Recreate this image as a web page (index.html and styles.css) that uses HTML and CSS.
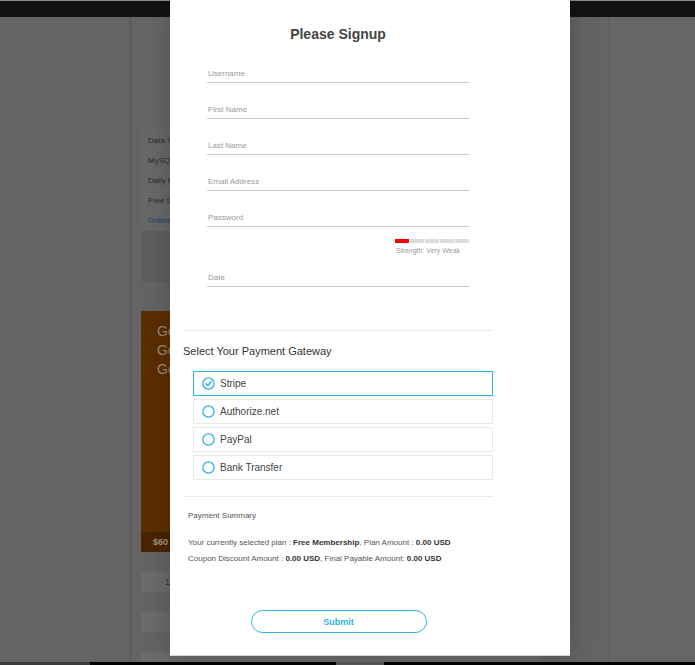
FILE: index.html
```html
<!DOCTYPE html>
<html>
<head>
<meta charset="utf-8">
<link rel="stylesheet" href="styles.css">
</head>
<body>
<div class="topbar"></div>
<div class="page">
  <div class="left"></div>
  <div class="main">
    <div class="card">
      <div class="card-top"></div>
      <div class="feat">Data Storage</div>
      <div class="feat">MySQL Databases</div>
      <div class="feat">Daily Backups</div>
      <div class="feat">Free Domain</div>
      <div class="feat link">Online Support</div>
      <div class="card-foot"></div>
    </div>
    <div class="promo">
      <div class="promo-text">Get<br>Get<br>Get</div>
      <div class="promo-price">$60</div>
    </div>
    <div class="row">15</div>
    <div class="row"></div>
    <div class="row last"></div>
  </div>
  <div class="right"></div>
</div>
<div class="bottombar">
  <span class="b1"></span><span class="b2"></span><span class="b3"></span><span class="b4"></span>
</div>

<div class="modal">
  <div class="inner">
    <h1 class="title">Please Signup</h1>
    <div class="form">
      <div class="field">Username</div>
      <div class="field">First Name</div>
      <div class="field">Last Name</div>
      <div class="field">Email Address</div>
      <div class="field">Password</div>
      <div class="strength">
        <div class="meter"><span class="seg red"></span><span class="seg"></span><span class="seg"></span><span class="seg"></span><span class="seg"></span></div>
        <div class="strength-text">Strength: Very Weak</div>
      </div>
      <div class="field date">Date</div>
    </div>
    <div class="divider first"></div>
    <div class="gw-title">Select Your Payment Gateway</div>
    <div class="options">
      <div class="option selected">
        <svg class="radio" width="13" height="13" viewBox="0 0 13 13"><circle cx="6.5" cy="6.5" r="5.6" fill="none" stroke="#2bb3e5" stroke-width="1.3"/><path d="M3.9 6.7 L5.8 8.5 L9.2 4.7" fill="none" stroke="#2bb3e5" stroke-width="1.4" stroke-linecap="round" stroke-linejoin="round"/></svg>
        <span>Stripe</span>
      </div>
      <div class="option">
        <svg class="radio" width="13" height="13" viewBox="0 0 13 13"><circle cx="6.5" cy="6.5" r="5.6" fill="none" stroke="#2bb3e5" stroke-width="1.3"/></svg>
        <span>Authorize.net</span>
      </div>
      <div class="option">
        <svg class="radio" width="13" height="13" viewBox="0 0 13 13"><circle cx="6.5" cy="6.5" r="5.6" fill="none" stroke="#2bb3e5" stroke-width="1.3"/></svg>
        <span>PayPal</span>
      </div>
      <div class="option">
        <svg class="radio" width="13" height="13" viewBox="0 0 13 13"><circle cx="6.5" cy="6.5" r="5.6" fill="none" stroke="#2bb3e5" stroke-width="1.3"/></svg>
        <span>Bank Transfer</span>
      </div>
    </div>
    <div class="divider second"></div>
    <div class="summary-title">Payment Summary</div>
    <div class="summary">
      <div>Your currently selected plan : <b>Free Membership</b>, Plan Amount : <b>0.00 USD</b></div>
      <div>Coupon Discount Amount : <b>0.00 USD</b>, Final Payable Amount: <b>0.00 USD</b></div>
    </div>
    <div class="submit-wrap"><button class="submit">Submit</button></div>
  </div>
</div>
</body>
</html>
```

FILE: styles.css
```css
* { box-sizing: border-box; }
html, body { margin: 0; padding: 0; }
body {
  width: 695px;
  height: 665px;
  overflow: hidden;
  background: #666;
  font-family: "Liberation Sans", Arial, sans-serif;
  position: relative;
}

/* background page (dimmed) */
.topbar {
  height: 17px;
  background: #111214;
  border-top: 1px solid #8c8c8c;
}
.page {
  display: flex;
  height: 645px;
}
.left {
  width: 131px;
  background: #646464;
  border-right: 1px solid #575757;
}
.main {
  width: 478px;
  padding-left: 10px;
  background: #646464;
}
.right {
  flex: 1;
  background: #666;
  border-left: 1px solid #575757;
}
.card {
  width: 400px;
  height: 265px;
  background: #666;
  display: flex;
  flex-direction: column;
}
.card-top { height: 114px; }
.feat {
  height: 20px;
  line-height: 20px;
  padding-left: 7px;
  font-size: 8px;
  color: #2c2c2c;
  background: #686868;
}
.feat.link { color: #1d4466; }
.card-foot {
  flex: 1;
  background: #5e5e5e;
}
.promo {
  margin-top: 29px;
  width: 400px;
  height: 241px;
  background: #5c2e01;
  display: flex;
  flex-direction: column;
}
.promo-text {
  flex: 1;
  padding: 11px 0 0 16px;
  font-size: 14px;
  line-height: 19px;
  color: #9c8a7a;
}
.promo-price {
  height: 20px;
  line-height: 20px;
  padding-left: 12px;
  font-size: 9px;
  font-weight: bold;
  color: #a5968a;
  background: #4b2400;
}
.row {
  margin-top: 20px;
  width: 400px;
  height: 20px;
  line-height: 20px;
  padding-left: 24px;
  font-size: 9px;
  color: #333;
  background: #6b6b6b;
}
.row.last { height: 10px; }
.bottombar {
  display: flex;
  height: 3px;
}
.bottombar span { display: block; height: 3px; }
.b1 { width: 90px; background: #3a3a3a; }
.b2 { width: 246px; background: #000; }
.b3 { width: 48px; background: #5b5b5b; }
.b4 { flex: 1; background: #000; }

/* modal */
.modal {
  position: absolute;
  left: 170px;
  top: 0;
  width: 400px;
  height: 656px;
  background: #fff;
  border-bottom: 1px solid #d8d8d8;
  box-shadow: 0 0 26px rgba(0, 0, 0, 0.22);
}
.inner {
  margin-left: 13px;
  width: 310px;
}
.title {
  margin: 0;
  padding-top: 26px;
  font-size: 14px;
  line-height: 16px;
  font-weight: bold;
  color: #444;
  text-align: center;
}
.form {
  width: 262px;
  margin: 27px auto 0;
}
.field {
  height: 14px;
  margin-bottom: 22px;
  padding-left: 1px;
  font-size: 8px;
  line-height: 10px;
  color: #9a9a9a;
  border-bottom: 1px solid #c9c9c9;
}
.field.date { margin-bottom: 0; }
.strength {
  width: 74px;
  margin: -10px 0 18px auto;
}
.meter {
  display: flex;
  gap: 1px;
  height: 4px;
}
.seg {
  flex: 1;
  background: #dcdcdc;
}
.seg.red { background: #f00; }
.strength-text {
  margin-top: 3px;
  padding-left: 1px;
  font-size: 7px;
  line-height: 9px;
  color: #9a9a9a;
  white-space: nowrap;
}
.divider {
  height: 1px;
  background: #ebebeb;
}
.divider.first { margin-top: 43px; }
.gw-title {
  margin-top: 14px;
  font-size: 11px;
  line-height: 13px;
  color: #333;
}
.options {
  margin: 13px 0 0 10px;
  width: 300px;
  display: flex;
  flex-direction: column;
  gap: 3px;
}
.option {
  height: 25px;
  display: flex;
  align-items: center;
  gap: 5px;
  padding-left: 8px;
  border: 1px solid #e8e8e8;
  font-size: 10px;
  color: #444;
}
.option.selected { border-color: #2bb3e5; }
.radio { display: block; flex: none; }
.divider.second { margin-top: 16px; }
.summary-title {
  margin-top: 14px;
  padding-left: 5px;
  font-size: 8px;
  line-height: 10px;
  color: #555;
}
.summary {
  margin-top: 14px;
  padding-left: 5px;
  font-size: 8px;
  line-height: 16px;
  color: #555;
}
.summary b { color: #333; }
.submit-wrap {
  margin-top: 43px;
  display: flex;
  justify-content: center;
}
.submit {
  width: 176px;
  height: 23px;
  margin-left: 1px;
  border: 1px solid #2bb3e5;
  border-radius: 12px;
  background: #fff;
  color: #2bb3e5;
  font-family: "Liberation Sans", Arial, sans-serif;
  font-size: 9px;
  font-weight: bold;
  padding: 0;
}
```
